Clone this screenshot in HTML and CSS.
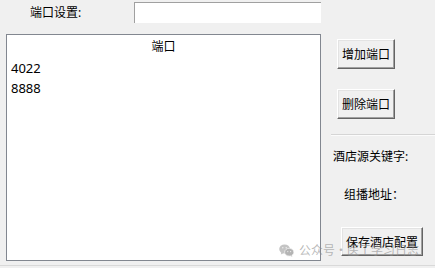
FILE: index.html
```html
<!DOCTYPE html>
<html lang="zh-CN">
  <head>
    <meta charset="UTF-8" />
    <title>端口设置</title>
    <link rel="stylesheet" href="styles.css">
  </head>
  <body>
    <div class="window">
      <div class="top-row">
        <span class="top-label">端口设置:</span>
        <div class="port-input"></div>
      </div>

      <div class="main">
        <div class="port-list">
          <div class="list-head">端口</div>
          <div class="list-row">4022</div>
          <div class="list-row">8888</div>
        </div>

        <div class="side">
          <button class="win-btn btn-add">增加端口</button>
          <button class="win-btn btn-del">删除端口</button>
          <div class="separator"></div>
          <div class="side-label label-key">酒店源关键字:</div>
          <div class="side-label label-addr">组播地址：</div>
          <button class="win-btn btn-save">保存酒店配置</button>
        </div>
      </div>

      <div class="footer"></div>

      <!-- watermark over the bottom of the window -->
      <div class="watermark">
        <svg width="15" height="13" viewBox="0 0 15 13">
          <ellipse cx="5.6" cy="5" rx="5.4" ry="4.6" fill="#c4c4c4"/>
          <path d="M2.4 8.4 L1.8 10.6 L4.4 9.3 Z" fill="#c4c4c4"/>
          <ellipse cx="10.2" cy="8.2" rx="4.6" ry="3.9" fill="#b4b4b4" stroke="#f0f0f0" stroke-width="0.8"/>
          <path d="M12.6 11.2 L13.4 12.8 L11.2 11.8 Z" fill="#b4b4b4"/>
          <circle cx="3.8" cy="3.8" r="0.7" fill="#f0f0f0"/>
          <circle cx="7.2" cy="3.8" r="0.7" fill="#f0f0f0"/>
          <circle cx="8.8" cy="7.6" r="0.6" fill="#f0f0f0"/>
          <circle cx="11.6" cy="7.6" r="0.6" fill="#f0f0f0"/>
        </svg>
        <span class="wm-text">公众号·医工学习日志</span>
      </div>
    </div>
  </body>
</html>
```

FILE: styles.css
```css
* {
  margin: 0;
  padding: 0;
  box-sizing: border-box;
}

body {
  background-color: #f0f0f0;
  color: #000000;
  font-family: "Noto Sans", "Noto Sans CJK SC", sans-serif;
  font-size: 12px;
  overflow: hidden;
}

.window {
  position: relative;
  width: 435px;
  height: 268px;
  display: flex;
  flex-direction: column;
}

.top-row {
  display: flex;
  align-items: center;
  height: 21px;
  margin-top: 2px;
  padding-left: 30px;
}

.top-label {
  width: 104px;
  line-height: 16px;
}

.port-input {
  width: 187px;
  height: 21px;
  background: #ffffff;
  border-top: 1px solid #a0a0a0;
  border-left: 1px solid #a0a0a0;
}

.main {
  display: flex;
  margin-top: 11px;
  height: 227px;
}

.port-list {
  margin-left: 6px;
  width: 315px;
  height: 227px;
  background: #ffffff;
  border: 1px solid #828790;
}

.list-head {
  height: 23px;
  line-height: 23px;
  text-align: center;
}

.list-row {
  height: 20px;
  line-height: 20px;
  padding-left: 4px;
  font-size: 13px;
}

.side {
  display: flex;
  flex-direction: column;
  align-items: flex-start;
  margin-left: 10px;
  width: 104px;
}

.win-btn {
  font-family: "Noto Sans CJK SC", sans-serif;
  font-size: 12px;
  color: #000000;
  background: #f0f0f0;
  border: 1px solid;
  border-color: #ffffff #646464 #646464 #ffffff;
  box-shadow: inset -1px -1px 0 #a0a0a0, inset 1px 1px 0 #e3e3e3;
  line-height: 16px;
  cursor: pointer;
}

.btn-add {
  margin-top: 5px;
  margin-left: 6px;
  width: 58px;
  height: 30px;
}

.btn-del {
  margin-top: 20px;
  margin-left: 6px;
  width: 58px;
  height: 30px;
}

.separator {
  margin-top: 15px;
  width: 104px;
  height: 2px;
  border-top: 1px solid #d5d5d5;
  border-bottom: 1px solid #fbfbfb;
}

.side-label {
  line-height: 16px;
}

.label-key {
  margin-top: 13px;
  margin-left: 2px;
}

.label-addr {
  margin-top: 22px;
  margin-left: 13px;
}

.btn-save {
  margin-top: 24px;
  margin-left: 10px;
  width: 82px;
  height: 29px;
}

.footer {
  margin-top: 4px;
  height: 3px;
  border-top: 1px solid #d9d9d9;
}

.watermark {
  position: absolute;
  left: 279px;
  top: 242px;
  display: flex;
  align-items: center;
  gap: 5px;
  pointer-events: none;
}

.wm-text {
  font-family: "Noto Sans CJK SC", sans-serif;
  font-size: 12px;
  line-height: 16px;
  color: rgba(140, 140, 140, 0.6);
}
```
